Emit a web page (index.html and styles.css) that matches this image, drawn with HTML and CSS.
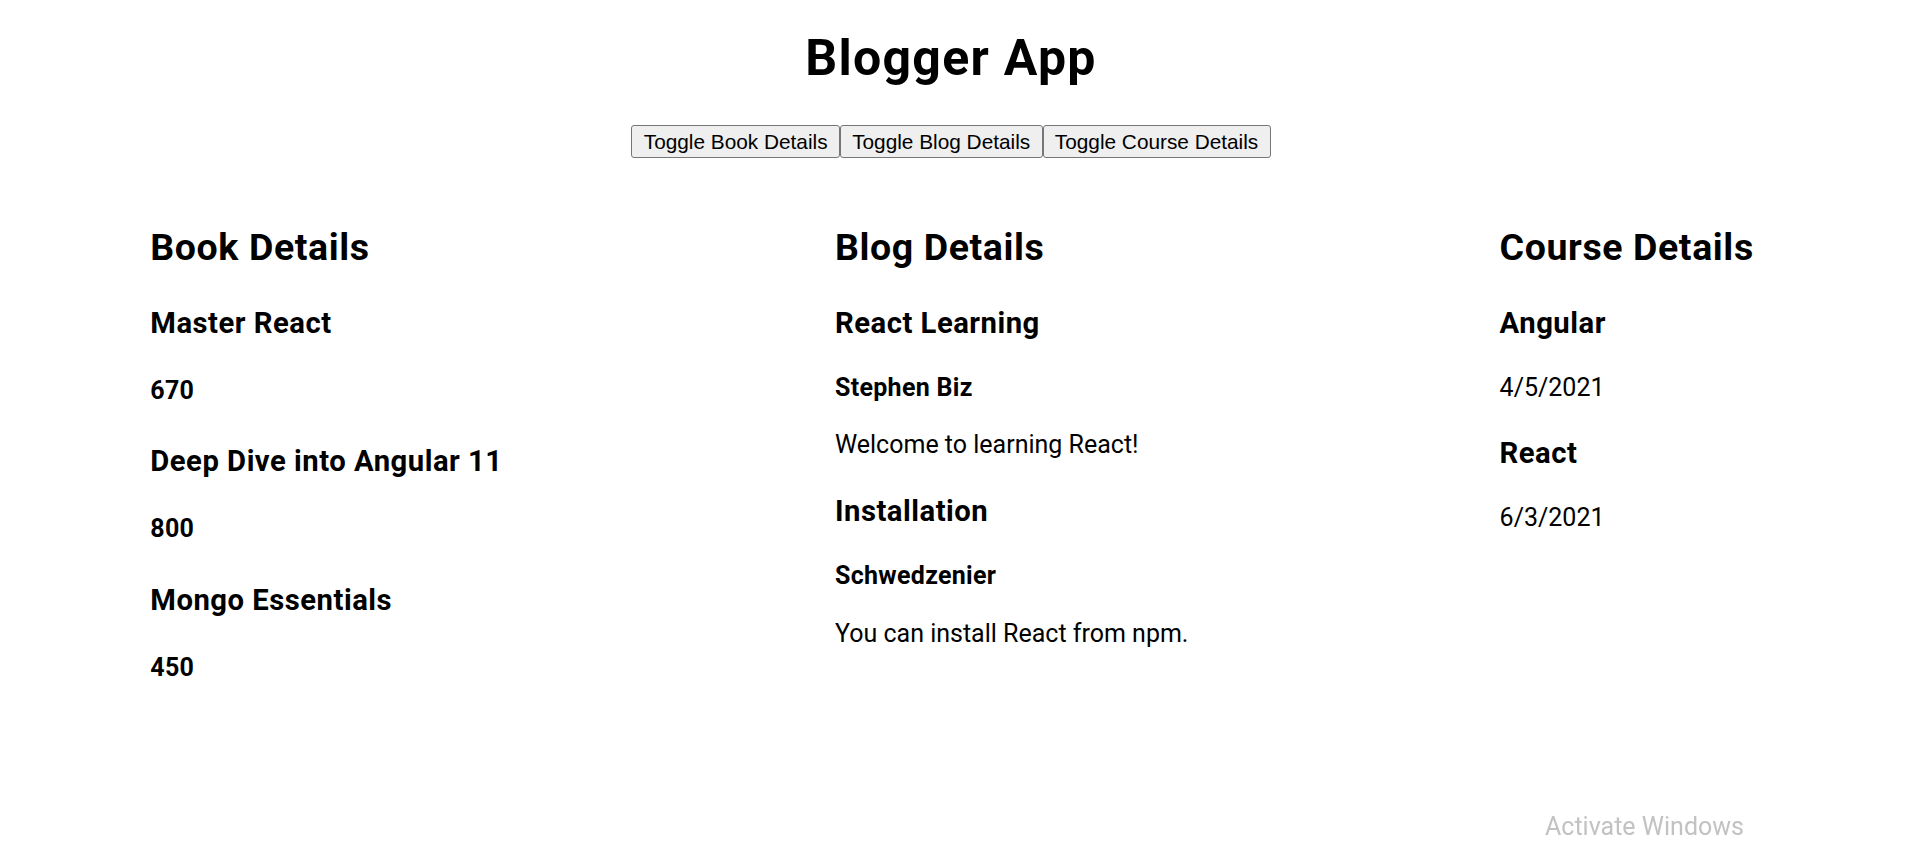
FILE: index.html
```html
<!DOCTYPE html>
<html lang="en">
<head>
<meta charset="utf-8">
<title>Blogger App</title>
<link rel="stylesheet" href="styles.css">
</head>
<body>
<div class="app">
  <header class="header">
    <h1 class="title">Blogger App</h1>
    <div class="toggles"><button class="toggle">Toggle Book Details</button><button class="toggle">Toggle Blog Details</button><button class="toggle">Toggle Course Details</button></div>
  </header>
  <main class="columns">
    <section class="col">
      <h2 class="col-title">Book Details</h2>
      <h3 class="item-title">Master React</h3>
      <h4 class="item-price">670</h4>
      <h3 class="item-title">Deep Dive into Angular 11</h3>
      <h4 class="item-price">800</h4>
      <h3 class="item-title">Mongo Essentials</h3>
      <h4 class="item-price">450</h4>
    </section>
    <section class="col">
      <h2 class="col-title">Blog Details</h2>
      <h3 class="item-title">React Learning</h3>
      <p class="item-text author">Stephen Biz</p>
      <p class="item-text">Welcome to learning React!</p>
      <h3 class="item-title">Installation</h3>
      <p class="item-text author">Schwedzenier</p>
      <p class="item-text">You can install React from npm.</p>
    </section>
    <section class="col">
      <h2 class="col-title">Course Details</h2>
      <h3 class="item-title">Angular</h3>
      <p class="item-text">4/5/2021</p>
      <h3 class="item-title">React</h3>
      <p class="item-text">6/3/2021</p>
    </section>
  </main>
</div>
<div class="watermark">Activate Windows</div>
</body>
</html>
```
FILE: styles.css
```css
html, body {
  margin: 0;
  padding: 0;
  background: #ffffff;
}

body {
  font-family: Roboto, "Liberation Sans", sans-serif;
  color: #000000;
  font-size: 25px;
  line-height: 1.33;
}

.app {
  display: flex;
  flex-direction: column;
}

.header {
  display: flex;
  flex-direction: column;
  align-items: center;
  padding: 24.65px 6px 0 0;
}

.title {
  margin: 0 0 33.85px 0;
  font-size: 50px;
  font-weight: 700;
  line-height: 1.33;
  letter-spacing: 1.3px;
}

.toggles {
  display: flex;
}

.toggle {
  font-family: "Liberation Sans", Arial, sans-serif;
  font-size: 20.8px;
  line-height: normal;
  color: #000000;
  background: #efefef;
  border: 1px solid #767676;
  border-radius: 3px;
  padding: 3.5px 11.3px;
  margin: 0;
  height: 33.3px;
}

.columns {
  display: grid;
  grid-template-columns: 684.7px 664.6px auto;
  padding: 64.9px 0 0 150.3px;
}

.col {
  display: block;
}

.col-title {
  margin: 0 0 30.75px 0;
  font-size: 37.5px;
  font-weight: 700;
  line-height: 1.33;
  letter-spacing: 0.6px;
}

.item-title {
  margin: 30.5px 0 28px 0;
  font-size: 29.25px;
  font-weight: 700;
  line-height: 1.33;
  letter-spacing: 0.5px;
}

.col-title + .item-title {
  margin-top: 0;
}

.item-price {
  margin: 31.35px 0 34.9px 0;
  font-size: 25px;
  font-weight: 700;
  line-height: 1.33;
  letter-spacing: 0.3px;
}

.item-text {
  margin: 24.4px 0;
  font-size: 25px;
  font-weight: 400;
  line-height: 1.33;
}

.item-title + .item-text {
  margin-top: 0;
}

.author {
  font-weight: 700;
  letter-spacing: 0.3px;
}

.watermark {
  position: fixed;
  left: 1545px;
  top: 814px;
  font-family: Roboto, "Open Sans", sans-serif;
  font-size: 25px;
  line-height: 1;
  color: #c2c2c2;
  white-space: nowrap;
}
```
